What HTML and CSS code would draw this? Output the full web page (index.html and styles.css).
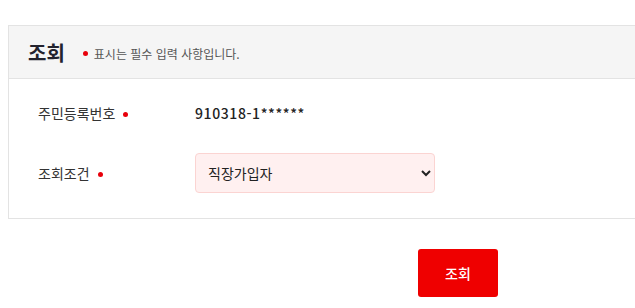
FILE: index.html
```html
<!DOCTYPE html>
<html lang="ko">

<head>
    <meta charset="utf-8">
    <title>조회</title>
    <link rel="stylesheet" href="styles.css">
</head>

<body>
    <div class="page">
        <div class="panel">
            <div class="panel-head">
                <h2 class="panel-title">조회</h2>
                <p class="panel-note"><i class="req"></i>표시는 필수 입력 사항입니다.</p>
            </div>
            <div class="panel-body">
                <div class="row">
                    <span class="label">주민등록번호<i class="req"></i></span>
                    <span class="value">910318-1******</span>
                </div>
                <div class="row">
                    <label class="label" for="cond">조회조건<i class="req"></i></label>
                    <select id="cond" class="select">
                        <option>직장가입자</option>
                        <option>지역가입자</option>
                    </select>
                </div>
            </div>
        </div>
        <div class="actions">
            <button class="btn-search">조회</button>
        </div>
    </div>
</body>

</html>
```

FILE: styles.css
```css
html,
body {
    margin: 0;
    padding: 0;
    overflow: hidden;
}

body {
    font-family: "Noto Sans CJK KR", "Noto Sans", sans-serif;
    color: #333;
    background: #fff;
}

.page {
    width: 900px;
    padding: 25px 8px;
}

.panel {
    border: 1px solid #e3e3e3;
}

.panel-head {
    display: flex;
    align-items: center;
    height: 52px;
    padding: 0 19px;
    background: #f5f5f5;
    border-bottom: 1px solid #e3e3e3;
}

.panel-title {
    margin: 0;
    font-size: 20px;
    font-weight: 700;
    color: #23232e;
}

.panel-note {
    display: flex;
    align-items: center;
    margin: 2px 0 0 18px;
    font-size: 12px;
    color: #555;
}

.panel-note .req {
    margin: 0 6px 0 0;
    top: 0;
}

.req {
    display: inline-block;
    width: 5px;
    height: 5px;
    border-radius: 50%;
    background: #e8000b;
    margin-left: 8px;
    vertical-align: middle;
    position: relative;
    top: -1px;
}

.panel-body {
    display: flex;
    flex-direction: column;
    gap: 20px;
    padding: 14px 29px 25px;
}

.row {
    display: flex;
    align-items: center;
    height: 40px;
}

.label {
    width: 157px;
    font-size: 14px;
    color: #333;
}

.value {
    font-size: 14px;
    font-weight: 500;
    letter-spacing: 0.6px;
    color: #222;
}

.select {
    width: 240px;
    height: 40px;
    padding: 0 6px 0 8px;
    border: 1px solid #fbd4d2;
    border-radius: 4px;
    background: #fff0f0;
    font-family: inherit;
    font-size: 14px;
    color: #222;
    outline: none;
}

.actions {
    display: flex;
    justify-content: center;
    padding-top: 30px;
}

.btn-search {
    width: 80px;
    height: 48px;
    border: none;
    border-radius: 3px;
    background: #ef0000;
    color: #fff;
    font-family: inherit;
    font-size: 14px;
    font-weight: 500;
    cursor: pointer;
}
```
